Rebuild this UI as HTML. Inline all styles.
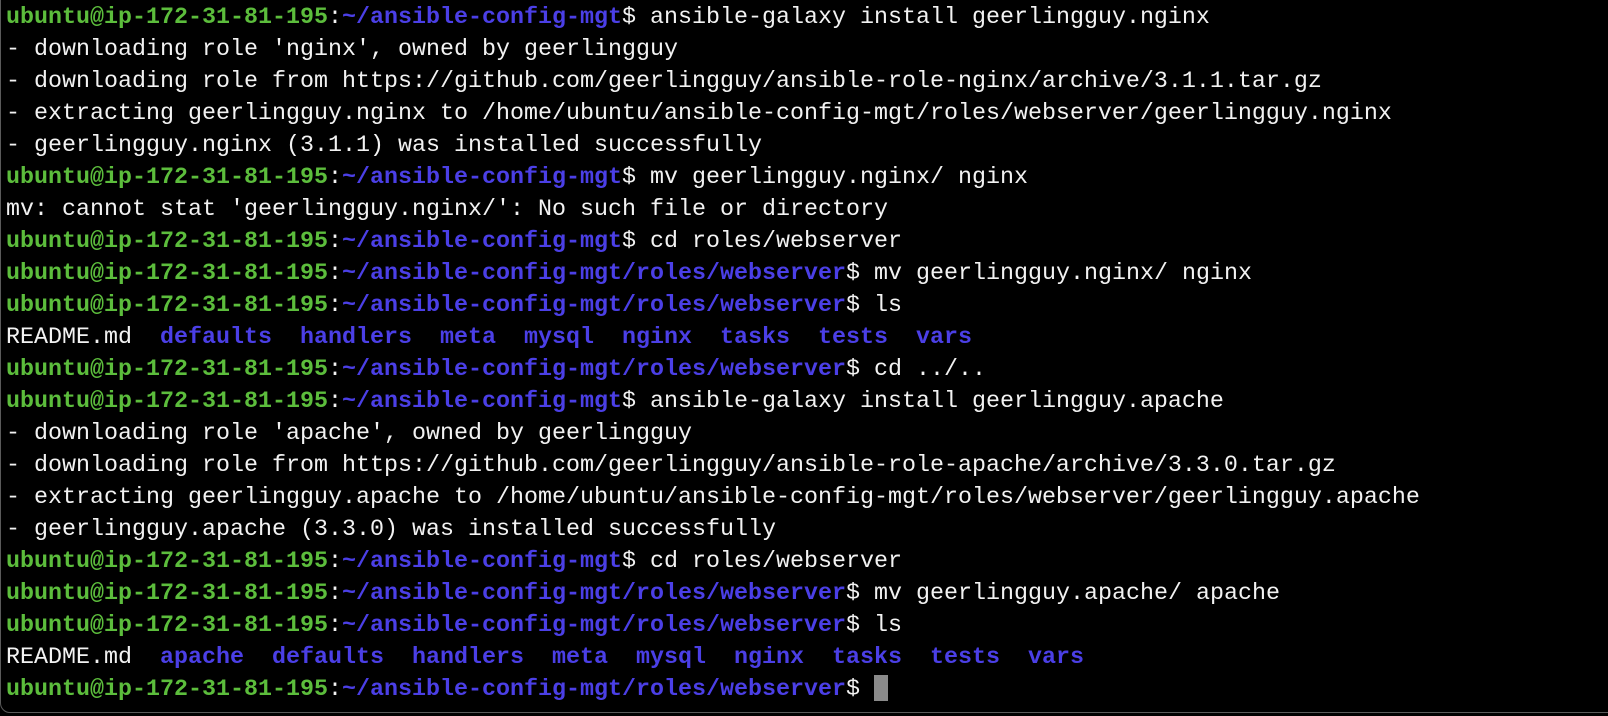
<!DOCTYPE html>
<html><head><meta charset="utf-8"><style>
html,body{margin:0;padding:0;background:#000;width:1608px;height:716px;overflow:hidden}
.frame{position:absolute;left:0;top:-20px;width:1620px;height:731px;border:1px solid #5a5a5a;border-radius:10px;background:#000}
.l{position:absolute;left:6px;margin:0;white-space:pre;font-family:"Liberation Mono",monospace;font-size:23.33px;line-height:32px;color:#f2f2f2}
.g{color:#5cbd3c;font-weight:bold}
.b{color:#4b3fe6;font-weight:bold}
.c{display:inline-block;width:14px;height:26px;background:#8a8a8a;vertical-align:-6px}
</style></head><body><div class="frame"></div>
<div class="l" style="top:2px"><span class="g">ubuntu@ip-172-31-81-195</span>:<span class="b">~/ansible-config-mgt</span>$ ansible-galaxy install geerlingguy.nginx</div>
<div class="l" style="top:34px">- downloading role 'nginx', owned by geerlingguy</div>
<div class="l" style="top:66px">- downloading role from https://github.com/geerlingguy/ansible-role-nginx/archive/3.1.1.tar.gz</div>
<div class="l" style="top:98px">- extracting geerlingguy.nginx to /home/ubuntu/ansible-config-mgt/roles/webserver/geerlingguy.nginx</div>
<div class="l" style="top:130px">- geerlingguy.nginx (3.1.1) was installed successfully</div>
<div class="l" style="top:162px"><span class="g">ubuntu@ip-172-31-81-195</span>:<span class="b">~/ansible-config-mgt</span>$ mv geerlingguy.nginx/ nginx</div>
<div class="l" style="top:194px">mv: cannot stat 'geerlingguy.nginx/': No such file or directory</div>
<div class="l" style="top:226px"><span class="g">ubuntu@ip-172-31-81-195</span>:<span class="b">~/ansible-config-mgt</span>$ cd roles/webserver</div>
<div class="l" style="top:258px"><span class="g">ubuntu@ip-172-31-81-195</span>:<span class="b">~/ansible-config-mgt/roles/webserver</span>$ mv geerlingguy.nginx/ nginx</div>
<div class="l" style="top:290px"><span class="g">ubuntu@ip-172-31-81-195</span>:<span class="b">~/ansible-config-mgt/roles/webserver</span>$ ls</div>
<div class="l" style="top:322px">README.md  <span class="b">defaults</span>  <span class="b">handlers</span>  <span class="b">meta</span>  <span class="b">mysql</span>  <span class="b">nginx</span>  <span class="b">tasks</span>  <span class="b">tests</span>  <span class="b">vars</span></div>
<div class="l" style="top:354px"><span class="g">ubuntu@ip-172-31-81-195</span>:<span class="b">~/ansible-config-mgt/roles/webserver</span>$ cd ../..</div>
<div class="l" style="top:386px"><span class="g">ubuntu@ip-172-31-81-195</span>:<span class="b">~/ansible-config-mgt</span>$ ansible-galaxy install geerlingguy.apache</div>
<div class="l" style="top:418px">- downloading role 'apache', owned by geerlingguy</div>
<div class="l" style="top:450px">- downloading role from https://github.com/geerlingguy/ansible-role-apache/archive/3.3.0.tar.gz</div>
<div class="l" style="top:482px">- extracting geerlingguy.apache to /home/ubuntu/ansible-config-mgt/roles/webserver/geerlingguy.apache</div>
<div class="l" style="top:514px">- geerlingguy.apache (3.3.0) was installed successfully</div>
<div class="l" style="top:546px"><span class="g">ubuntu@ip-172-31-81-195</span>:<span class="b">~/ansible-config-mgt</span>$ cd roles/webserver</div>
<div class="l" style="top:578px"><span class="g">ubuntu@ip-172-31-81-195</span>:<span class="b">~/ansible-config-mgt/roles/webserver</span>$ mv geerlingguy.apache/ apache</div>
<div class="l" style="top:610px"><span class="g">ubuntu@ip-172-31-81-195</span>:<span class="b">~/ansible-config-mgt/roles/webserver</span>$ ls</div>
<div class="l" style="top:642px">README.md  <span class="b">apache</span>  <span class="b">defaults</span>  <span class="b">handlers</span>  <span class="b">meta</span>  <span class="b">mysql</span>  <span class="b">nginx</span>  <span class="b">tasks</span>  <span class="b">tests</span>  <span class="b">vars</span></div>
<div class="l" style="top:674px"><span class="g">ubuntu@ip-172-31-81-195</span>:<span class="b">~/ansible-config-mgt/roles/webserver</span>$ <span class="c"></span></div>
</body></html>
